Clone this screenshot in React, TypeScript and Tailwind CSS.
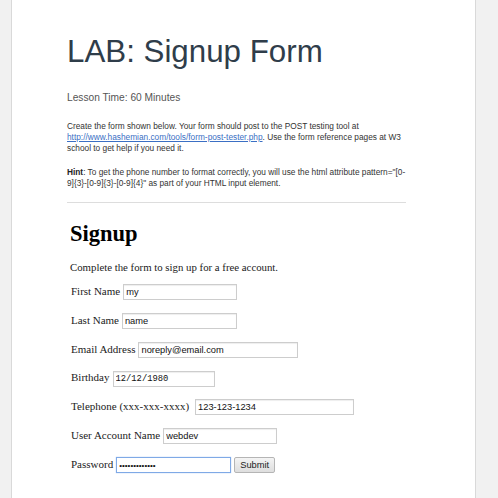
const sans = "font-['Liberation_Sans',Arial,sans-serif]";
const serif = "font-['Liberation_Serif','Times_New_Roman',serif]";

function Field({
  label,
  value,
  width,
  gap = "gap-[3px]",
  mono = false,
}: {
  label: string;
  value: string;
  width: string;
  gap?: string;
  mono?: boolean;
}) {
  return (
    <div className={`flex h-[16px] items-baseline ${gap}`}>
      <span className="text-[11px] leading-[16px] text-[#222]">{label}</span>
      <input
        type="text"
        value={value}
        readOnly
        className={`${width} h-[16px] border border-[#cdcdcd] px-[2px] py-0 leading-[14px] text-[#111] shadow-[inset_0_1px_1px_#eeeeee] outline-none ${
          mono
            ? "font-['Liberation_Mono','Courier_New',monospace] text-[8.8px]"
            : `${sans} text-[9.3px]`
        }`}
      />
    </div>
  );
}

export default function App() {
  return (
    <div className="min-h-[498px] bg-[#f1f1f1] pl-[11px] pr-[22px]">
      <div className="min-h-[498px] border-x border-[#d9d9d9] bg-white pl-[55px] pt-[34px]">
        <div className={`w-[339px] ${sans}`}>
          <h1 className="text-[31.3px] leading-[36px] text-[#2f3d4a]">LAB: Signup Form</h1>

          <p className="mt-[21px] text-[10.2px] leading-[14px] text-[#555]">
            Lesson Time: 60 Minutes
          </p>

          <p className="mt-[16px] text-[8.3px] leading-[11.2px] text-[#333]">
            Create the form shown below. Your form should post to the POST testing tool at{" "}
            <a href="#" className="text-[#3b6fc4] underline">
              http://www.hashemian.com/tools/form-post-tester.php
            </a>
            . Use the form reference pages at W3 school to get help if you need it.
          </p>

          <p className="mt-[12px] text-[8.3px] leading-[11.2px] text-[#333]">
            <b className="text-[#222]">Hint</b>: To get the phone number to format correctly, you
            will use the html attribute pattern="[0-9]{"{3}"}-[0-9]{"{3}"}-[0-9]{"{4}"}" as part of
            your HTML input element.
          </p>

          <hr className="mt-[13px] border-t border-[#dddddd]" />
        </div>

        <div className={`pl-[3px] ${serif}`}>
          <h2 className="mt-[18px] text-[22.5px] font-bold leading-[26px] text-black">Signup</h2>
          <p className="mt-[13px] text-[10.8px] leading-[14px] text-[#222]">
            Complete the form to sign up for a free account.
          </p>

          <form className="mt-[9px] flex flex-col gap-[12.8px] pb-[24px] pl-[1px]">
            <Field label="First Name" value="my" width="w-[114px]" />
            <Field label="Last Name" value="name" width="w-[115px]" />
            <Field label="Email Address" value="noreply@email.com" width="w-[160px]" />
            <Field label="Birthday" value="12/12/1980" width="w-[102px]" mono />
            <Field
              label="Telephone (xxx-xxx-xxxx)"
              value="123-123-1234"
              width="w-[159px]"
              gap="gap-[6px]"
            />
            <Field label="User Account Name" value="webdev" width="w-[114px]" />
            <div className="flex h-[16px] items-baseline gap-[3px]">
              <span className="text-[11px] leading-[16px] text-[#222]">Password</span>
              <input
                type="password"
                value="abcdefghijklm"
                readOnly
                className={`h-[16px] w-[115px] border border-[#7fa9e6] px-[2px] py-0 text-[8px] leading-[14px] text-[#111] shadow-[0_0_1px_#9bbcf0] outline-none ${sans}`}
              />
              <button
                type="button"
                className={`h-[16px] w-[41px] rounded-[2px] border border-[#b5b5b5] bg-gradient-to-b from-[#f4f4f4] to-[#dedede] text-[9.3px] leading-[14px] text-[#222] ${sans}`}
              >
                Submit
              </button>
            </div>
          </form>
        </div>
      </div>
    </div>
  );
}
